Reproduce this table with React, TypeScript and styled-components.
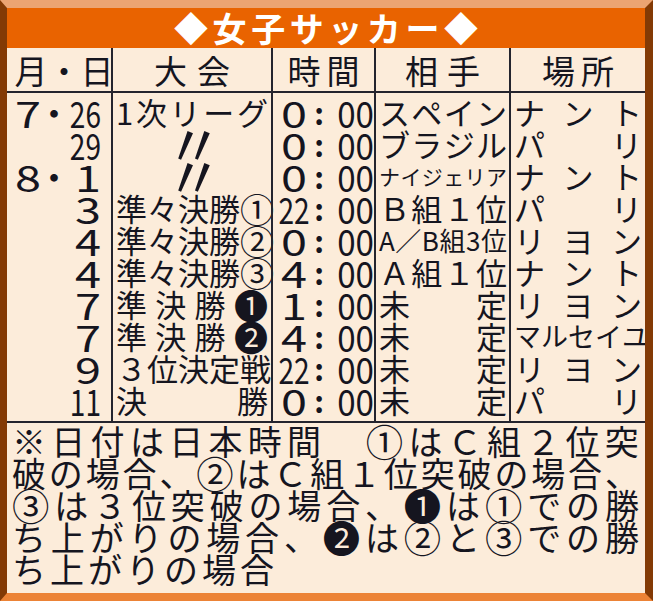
import React from "react";
import styled, { createGlobalStyle } from "styled-components";

const ink = "#15151f";
const rule = "#24242e";
const cream = "#fcecda";
const circled = "①②③❶❷";

const GlobalStyle = createGlobalStyle`
  html, body {
    margin: 0;
    padding: 0;
    background: ${cream};
  }
`;

const Frame = styled.div`
  width: 653px;
  height: 601px;
  box-sizing: border-box;
  border-style: solid;
  border-width: 8px 8px 8px 7px;
  border-color: #eca472 #833a05 #ec8336 #833a05;
  background: ${cream};
  display: flex;
  flex-direction: column;
  overflow: hidden;
  font-family: "Noto Sans CJK JP", "Noto Sans", sans-serif;
  color: ${ink};
`;

const TitleBar = styled.div`
  height: 40px;
  flex: none;
  background: #e96300;
  color: #fff;
  font-weight: 700;
  font-size: 34px;
  display: flex;
  justify-content: center;
  align-items: center;
`;

const Table = styled.div`
  display: grid;
  grid-template-columns: 104px 160px 103px 135px 136px;
`;

const HeadCell = styled.div<{ $first?: boolean }>`
  height: 45px;
  box-sizing: border-box;
  border-bottom: 2px solid ${rule};
  border-left: ${(p) => (p.$first ? "none" : `2px solid ${rule}`)};
  font-size: 33px;
  display: flex;
  justify-content: center;
  align-items: center;
`;

const Cell = styled.div<{ $first?: boolean; $edge?: "top" | "bottom" }>`
  height: 32px;
  padding-top: ${(p) => (p.$edge === "top" ? 3 : 0)}px;
  padding-bottom: ${(p) => (p.$edge === "bottom" ? 5 : 0)}px;
  border-left: ${(p) => (p.$first ? "none" : `2px solid ${rule}`)};
  border-bottom: ${(p) => (p.$edge === "bottom" ? `2px solid ${rule}` : "none")};
  display: flex;
  align-items: center;
  line-height: 32px;
`;

const DateBox = styled.div`
  flex: 1;
  display: flex;
  justify-content: flex-end;
  align-items: center;
  padding-right: 10px;
  font-size: 36px;
`;

const Slot = styled.span<{ $w: number; $align?: string }>`
  width: ${(p) => p.$w}px;
  display: flex;
  justify-content: ${(p) => p.$align || "center"};
`;

const Digits = styled.span<{ $sx: number; $origin?: string }>`
  display: inline-block;
  transform: scaleX(${(p) => p.$sx});
  transform-origin: ${(p) => p.$origin || "center"} center;
`;

const TimeBox = styled.div`
  flex: 1;
  display: flex;
  align-items: center;
  padding: 0 3px 0 3px;
  font-size: 36px;
`;

const Colon = styled.span`
  width: 14px;
  font-weight: 700;
  font-size: 30px;
  display: flex;
  justify-content: center;
`;

const SpreadRow = styled.div<{ $size: number; $pad: string }>`
  flex: 1;
  display: flex;
  justify-content: space-between;
  align-items: center;
  padding: ${(p) => p.$pad};
  font-size: ${(p) => p.$size}px;
  white-space: nowrap;
`;

const Ch = styled.span<{ $big?: boolean }>`
  display: block;
  font-size: ${(p) => (p.$big ? "1.1em" : "1em")};
  line-height: 32px;
`;

const Ditto = styled.span`
  flex: 1;
  text-align: center;
  font-size: 58px;
  line-height: 32px;
  transform: translate(2px, -2px);
`;

const Label = styled.div<{ $w: number }>`
  width: ${(p) => p.$w}px;
  display: flex;
  justify-content: space-between;
`;

const Notes = styled.div`
  flex: 1;
  padding: 2px 6px 0 5px;
  font-size: 34px;
  line-height: 32px;
`;

const NoteLine = styled.div`
  display: flex;
  justify-content: space-between;
  align-items: center;
`;

const LastLine = styled.div`
  letter-spacing: 4px;
`;

const chars = (text: string) =>
  Array.from(text).map((c, i) => (
    <Ch key={i} $big={circled.includes(c)}>
      {c}
    </Ch>
  ));

const Spread = ({ text, size = 31, pad = "0 3px" }: { text: string; size?: number; pad?: string }) => (
  <SpreadRow $size={size} $pad={pad}>
    {chars(text)}
  </SpreadRow>
);

const Num = ({ v, origin }: { v: string; origin?: string }) => (
  <Digits $sx={v.length > 1 ? 0.78 : 1.3} $origin={origin}>
    {v}
  </Digits>
);

type Match = {
  month?: string;
  day: string;
  event: string;
  hour: string;
  opp: string;
  oppSize?: number;
  venue: string;
  venueSize?: number;
};

const matches: Match[] = [
  { month: "7", day: "26", event: "1次リーグ", hour: "0", opp: "スペイン", venue: "ナント" },
  { day: "29", event: "〃", hour: "0", opp: "ブラジル", venue: "パリ" },
  { month: "8", day: "1", event: "〃", hour: "0", opp: "ナイジェリア", oppSize: 21, venue: "ナント" },
  { day: "3", event: "準々決勝①", hour: "22", opp: "Ｂ組１位", venue: "パリ" },
  { day: "4", event: "準々決勝②", hour: "0", opp: "A／B組3位", oppSize: 26, venue: "リヨン" },
  { day: "4", event: "準々決勝③", hour: "4", opp: "Ａ組１位", venue: "ナント" },
  { day: "7", event: "準決勝❶", hour: "1", opp: "未定", venue: "リヨン" },
  { day: "7", event: "準決勝❷", hour: "4", opp: "未定", venue: "マルセイユ", venueSize: 27 },
  { day: "9", event: "３位決定戦", hour: "22", opp: "未定", venue: "リヨン" },
  { day: "11", event: "決勝", hour: "0", opp: "未定", venue: "パリ" },
];

const notes = [
  "※日付は日本時間　①はＣ組２位突",
  "破の場合、②はＣ組１位突破の場合、",
  "③は３位突破の場合、❶は①での勝",
  "ち上がりの場合、❷は②と③での勝",
];

const heads: [string, number][] = [
  ["月・日", 89],
  ["大会", 76],
  ["時間", 72],
  ["相手", 75],
  ["場所", 72],
];

export default function App() {
  return (
    <>
      <GlobalStyle />
      <Frame>
        <TitleBar>
          <Label $w={304}>{chars("◆女子サッカー◆")}</Label>
        </TitleBar>
        <Table>
          {heads.map(([t, w], i) => (
            <HeadCell key={t} $first={i === 0}>
              <Label $w={w}>{chars(t)}</Label>
            </HeadCell>
          ))}
          {matches.map((m, r) => {
            const edge = r === 0 ? "top" : r === matches.length - 1 ? "bottom" : undefined;
            return (
              <React.Fragment key={r}>
                <Cell $first $edge={edge}>
                  <DateBox>
                    {m.month && (
                      <>
                        <Slot $w={27}>
                          <Num v={m.month} />
                        </Slot>
                        <Slot $w={26}>・</Slot>
                      </>
                    )}
                    <Slot $w={34} $align="flex-end">
                      <Num v={m.day} origin="right" />
                    </Slot>
                  </DateBox>
                </Cell>
                <Cell $edge={edge}>
                  {m.event === "〃" ? <Ditto>〃</Ditto> : <Spread text={m.event} />}
                </Cell>
                <Cell $edge={edge}>
                  <TimeBox>
                    <Slot $w={36}>
                      <Num v={m.hour} />
                    </Slot>
                    <Colon>:</Colon>
                    <Slot $w={48} $align="flex-end">
                      <Digits $sx={0.92} $origin="right">
                        00
                      </Digits>
                    </Slot>
                  </TimeBox>
                </Cell>
                <Cell $edge={edge}>
                  <Spread text={m.opp} size={m.oppSize} pad="0 2px 0 3px" />
                </Cell>
                <Cell $edge={edge}>
                  <Spread text={m.venue} size={m.venueSize} pad="0 3px 0 3px" />
                </Cell>
              </React.Fragment>
            );
          })}
        </Table>
        <Notes>
          {notes.map((n) => (
            <NoteLine key={n}>{chars(n)}</NoteLine>
          ))}
          <LastLine>ち上がりの場合</LastLine>
        </Notes>
      </Frame>
    </>
  );
}
